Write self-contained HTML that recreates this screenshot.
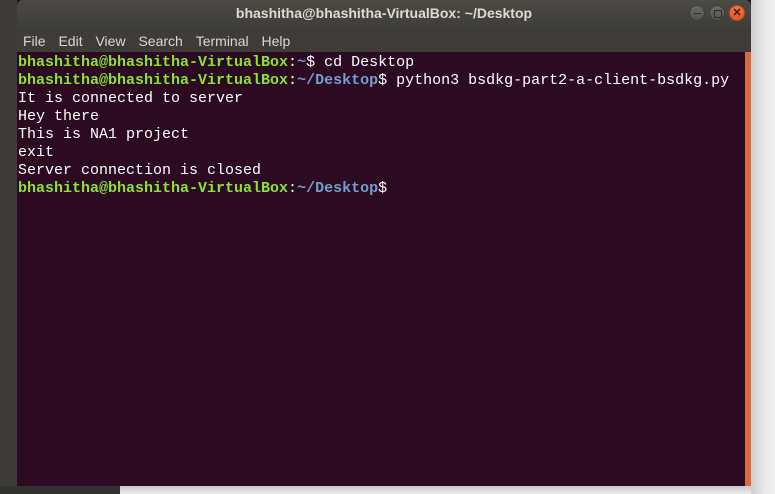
<!DOCTYPE html>
<html><head><meta charset="utf-8"><style>
body{margin:0;width:775px;height:494px;overflow:hidden;background:#ececec;position:relative;font-family:"Liberation Sans",sans-serif}
.ls{position:absolute;left:0;top:0;width:17px;height:494px;background:#3c3b37}
.bl{position:absolute;left:0;top:486px;width:120px;height:8px;background:#32322e;z-index:2}
.sh{position:absolute;left:751px;top:0;width:24px;height:494px;background:linear-gradient(90deg,#cfcfcf,#ebebeb 60%,#efefef)}
.sb{position:absolute;left:17px;top:486px;width:734px;height:8px;background:linear-gradient(#c8c8c8,#ececec)}
.win{position:absolute;left:17px;top:0;width:734px;height:486px;background:#2c0a22}
.tb{position:absolute;left:0;top:0;width:734px;height:29px;background:linear-gradient(#4b4a45,#3e3d39);border-radius:6px 6px 0 0;color:#dfdbd2;font-weight:bold;font-size:14px;text-align:center;line-height:27px}
.mb{position:absolute;left:0;top:29px;width:734px;height:23px;background:#3d3c38;color:#dcd8cf;font-size:14px;line-height:24px}
.mb span{margin-left:6px;margin-right:3px}
.btn{position:absolute;top:5px;width:16px;height:16px;border-radius:50%;background:linear-gradient(#6a6964,#54534e);border:1px solid #3a3935;box-sizing:border-box}
.term{position:absolute;left:0;top:54px;width:728px;height:432px;font-family:"Liberation Mono",monospace;font-size:15px;line-height:18px;color:#fff;white-space:pre;padding:0 0 0 1px}
.g{color:#8ae234;font-weight:bold}.b{color:#729fcf;font-weight:bold}
.or{position:absolute;left:728px;top:52px;width:6px;height:434px;background:#d86a3e}
</style></head><body>
<div class="ls"></div><div class="bl"></div><div class="sh"></div><div class="sb"></div>
<div class="win">
<div class="tb">bhashitha@bhashitha-VirtualBox: ~/Desktop
<div class="btn" style="left:672px"><div style="position:absolute;left:4px;top:7px;width:7px;height:1px;background:#2a2a28"></div></div>
<div class="btn" style="left:692px"><div style="position:absolute;left:4px;top:4px;width:6px;height:6px;border:1px solid #2a2a28"></div></div>
<div class="btn" style="left:712px;background:linear-gradient(#f0744a,#e05a2a);border-color:#b8461e;color:#3a1a10;font-size:11px;line-height:14px">✕</div>
</div>
<div class="mb"><span>File</span> <span>Edit</span> <span>View</span> <span>Search</span> <span>Terminal</span> <span>Help</span></div>
<div class="term"><span class="g">bhashitha@bhashitha-VirtualBox</span>:<span class="b">~</span>$ cd Desktop
<span class="g">bhashitha@bhashitha-VirtualBox</span>:<span class="b">~/Desktop</span>$ python3 bsdkg-part2-a-client-bsdkg.py
It is connected to server
Hey there
This is NA1 project
exit
Server connection is closed
<span class="g">bhashitha@bhashitha-VirtualBox</span>:<span class="b">~/Desktop</span>$ </div>
<div class="or"></div>
</div>
</body></html>
